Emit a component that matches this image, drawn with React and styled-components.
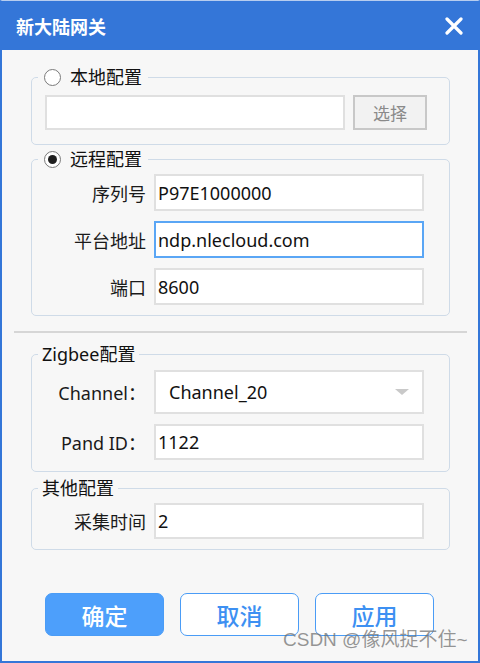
import React from 'react'
import styled, { createGlobalStyle } from 'styled-components'

const GlobalStyle = createGlobalStyle`
  html, body {
    margin: 0;
    padding: 0;
    background: #ffffff;
  }
  body {
    font-family: "Noto Sans", "Noto Sans CJK SC", sans-serif;
    color: #1a1a1a;
  }
  * {
    box-sizing: border-box;
  }
`

const Window = styled.div`
  width: 480px;
  height: 663px;
  border: 2px solid #3476d8;
  border-top: 1px solid #b7cdef;
  background: #f7f7f7;
  display: flex;
  flex-direction: column;
  position: relative;
  overflow: hidden;
`

const TitleBar = styled.header`
  height: 49px;
  flex-shrink: 0;
  background: #3476d8;
  display: flex;
  align-items: center;
  justify-content: space-between;
  padding: 0 15px 0 14px;
`

const Title = styled.h1`
  margin: 0;
  font-size: 18px;
  font-weight: 700;
  color: #ffffff;
`

const Close = styled.svg`
  width: 18px;
  height: 18px;
  display: block;
`

const Body = styled.main`
  flex: 1;
  display: flex;
  flex-direction: column;
`

const Group = styled.fieldset`
  margin: ${p => p.$top}px 0 0 29px;
  width: 419px;
  min-width: 0;
  border: 1px solid #cfdbe8;
  border-radius: 5px;
  padding: ${p => p.$pad};
`

const Legend = styled.legend`
  margin-left: 6px;
  padding: ${p => (p.$radio ? '0 6px 0 6px' : '0 4px')};
  height: 24px;
  line-height: 24px;
  font-size: 18px;
  display: flex;
  align-items: center;
  gap: 9px;
  color: #111;
`

const Radio = styled.span`
  width: 17px;
  height: 17px;
  border-radius: 50%;
  border: 1px solid #7a7a7a;
  background: #ffffff;
  display: flex;
  align-items: center;
  justify-content: center;
  &::after {
    content: '';
    width: 9px;
    height: 9px;
    border-radius: 50%;
    background: ${p => (p.$checked ? '#1f1f1f' : 'transparent')};
  }
`

const Rows = styled.div`
  display: flex;
  flex-direction: column;
  gap: 10px;
`

const Row = styled.div`
  display: flex;
  align-items: center;
  gap: 8px;
  padding-left: ${p => p.$indent || 0}px;
`

const Label = styled.span`
  width: 114px;
  text-align: right;
  font-size: 18px;
  color: #1a1a1a;
  white-space: nowrap;
`

const Field = styled.input`
  width: ${p => p.$w || 270}px;
  height: ${p => p.$h || 37}px;
  border: 2px solid ${p => (p.$focus ? '#5aa6f5' : '#e0e0e0')};
  background: #ffffff;
  padding: 0 0 0 2px;
  font-family: "Noto Sans", "Noto Sans CJK SC", sans-serif;
  font-size: 18px;
  color: #111;
  outline: none;
`

const PickButton = styled.button`
  width: 74px;
  height: 35px;
  background: #f2f2f2;
  border: 2px solid #c8c8c8;
  color: #8a8a8a;
  font-family: "Noto Sans CJK SC", sans-serif;
  font-size: 17px;
  padding: 0;
`

const Select = styled.div`
  width: 270px;
  height: 44px;
  border: 2px solid #e0e0e0;
  background: #ffffff;
  display: flex;
  align-items: center;
  justify-content: space-between;
  padding: 0 13px;
  font-size: 18px;
  color: #111;
`

const Caret = styled.span`
  width: 0;
  height: 0;
  border-left: 7px solid transparent;
  border-right: 7px solid transparent;
  border-top: 6px solid #c9c9c9;
`

const Divider = styled.hr`
  margin: 15px 0 0 12px;
  width: 453px;
  height: 2px;
  border: none;
  background: #d6d6d6;
`

const Actions = styled.div`
  margin: 43px 0 0 43px;
  display: flex;
  gap: 16px;
`

const ActionButton = styled.button`
  width: 119px;
  height: 43px;
  border-radius: 7px;
  border: 1px solid #4a9cf6;
  background: ${p => (p.$primary ? '#4d9ffb' : '#ffffff')};
  color: ${p => (p.$primary ? '#ffffff' : '#3d90f2')};
  font-family: "Noto Sans CJK SC", sans-serif;
  font-size: 23px;
  font-weight: 500;
  padding: 0;
`

const Watermark = styled.span`
  position: absolute;
  left: 281px;
  top: 627px;
  font-family: "Liberation Sans", "Noto Sans CJK SC", sans-serif;
  font-size: 19px;
  line-height: 24px;
  color: rgba(110, 110, 110, 0.72);
  pointer-events: none;
  white-space: nowrap;
`

const App = () => {
  return (
    <>
      <GlobalStyle />
      <Window>
        <TitleBar>
          <Title>新大陆网关</Title>
          <Close viewBox="0 0 18 18">
            <path d="M2 2 L16 16 M16 2 L2 16" stroke="#ffffff" strokeWidth="3.2" strokeLinecap="round" />
          </Close>
        </TitleBar>
        <Body>
          <Group $top={15} $pad="6px 0 14px 0">
            <Legend $radio>
              <Radio />
              本地配置
            </Legend>
            <Row $indent={13}>
              <Field $w={300} $h={35} readOnly value="" />
              <PickButton>选择</PickButton>
            </Row>
          </Group>

          <Group $top={2} $pad="3px 0 10px 0">
            <Legend $radio>
              <Radio $checked />
              远程配置
            </Legend>
            <Rows>
              <Row>
                <Label>序列号</Label>
                <Field readOnly value="P97E1000000" />
              </Row>
              <Row>
                <Label>平台地址</Label>
                <Field $focus readOnly value="ndp.nlecloud.com" />
              </Row>
              <Row>
                <Label>端口</Label>
                <Field readOnly value="8600" />
              </Row>
            </Rows>
          </Group>

          <Divider />

          <Group $top={9} $pad="4px 0 11px 0">
            <Legend>Zigbee配置</Legend>
            <Rows>
              <Row>
                <Label>Channel：</Label>
                <Select>
                  Channel_20
                  <Caret />
                </Select>
              </Row>
              <Row>
                <Label>Pand ID：</Label>
                <Field $h={36} readOnly value="1122" />
              </Row>
            </Rows>
          </Group>

          <Group $top={4} $pad="3px 0 10px 0">
            <Legend>其他配置</Legend>
            <Row>
              <Label>采集时间</Label>
              <Field $h={36} readOnly value="2" />
            </Row>
          </Group>

          <Actions>
            <ActionButton $primary>确定</ActionButton>
            <ActionButton>取消</ActionButton>
            <ActionButton>应用</ActionButton>
          </Actions>
        </Body>
        <Watermark>CSDN @像风捉不住~</Watermark>
      </Window>
    </>
  )
}

export default App
